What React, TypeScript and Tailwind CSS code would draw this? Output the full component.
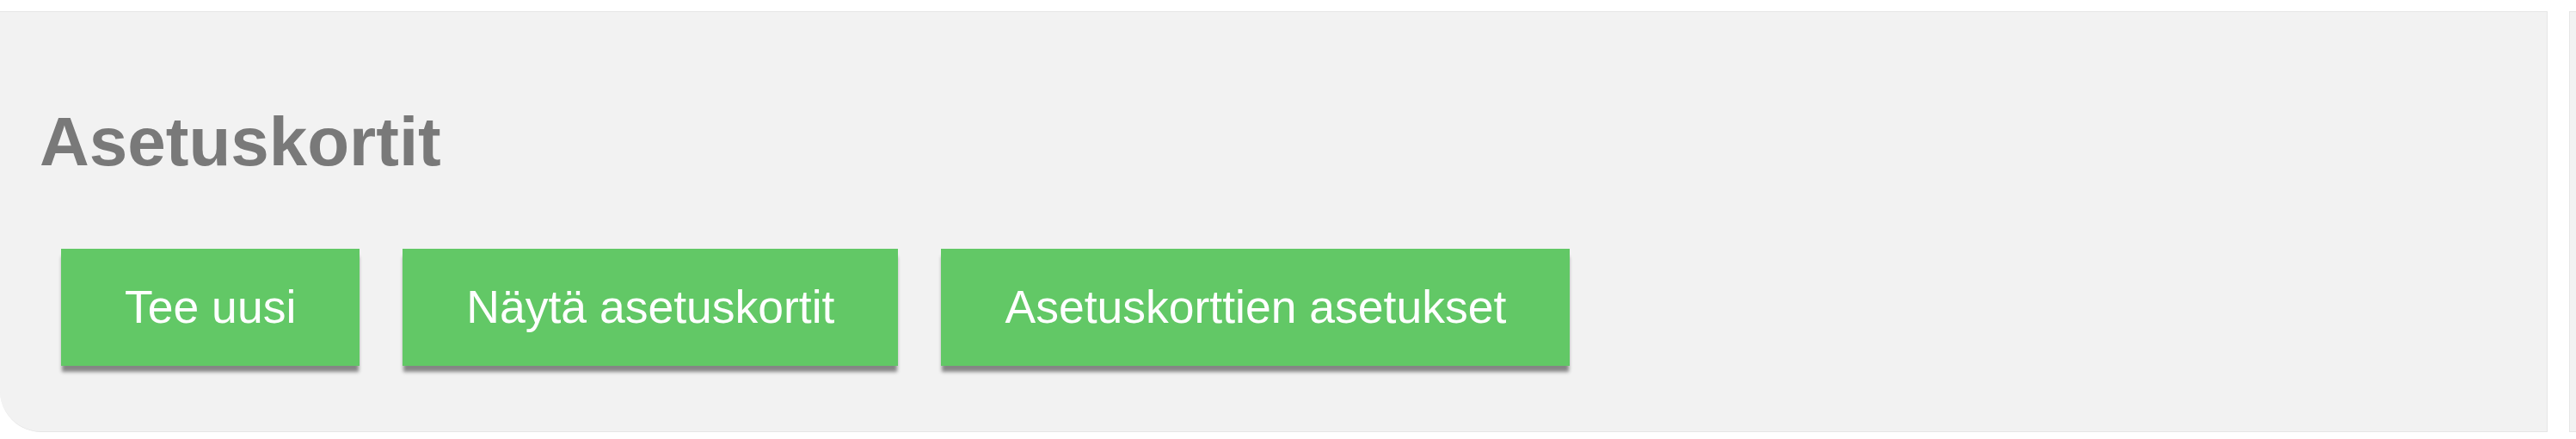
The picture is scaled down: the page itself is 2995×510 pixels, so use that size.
export default function App() {
  const actions = ["Tee uusi", "Näytä asetuskortit", "Asetuskorttien asetukset"];

  return (
    <div className="w-full h-[510px] bg-white pt-[13px] flex font-['Liberation_Sans',Arial,sans-serif] overflow-hidden">
      {/* Main panel */}
      <div className="w-[2962px] shrink-0 h-[489px] bg-[#f2f2f2] border-t border-r border-b border-[#e6e6e6] rounded-bl-[48px] flex flex-col">
        <h1 className="mt-[111px] ml-[46px] text-[80px] leading-none font-bold text-[#797979]">
          Asetuskortit
        </h1>
        <div className="mt-[84px] ml-[71px] flex gap-[50px]">
          {actions.map((label) => (
            <button
              key={label}
              className="h-[136px] px-[74px] bg-[#62c866] text-white text-[53.5px] leading-none shadow-[0_8px_4px_-1px_rgba(0,0,0,0.45)]"
            >
              {label}
            </button>
          ))}
        </div>
      </div>

      {/* Next panel peeking in */}
      <div className="ml-[25px] flex-1 h-[489px] bg-[#f2f2f2] border-t border-l border-b border-[#e6e6e6]" />
    </div>
  );
}
